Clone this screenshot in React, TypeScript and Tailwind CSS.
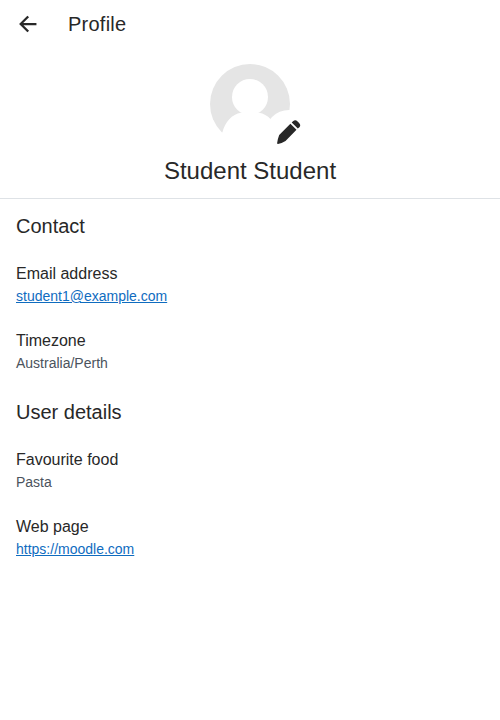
import React from "react";

type Field = { label: string; value: string; href?: string };

function Section({ title, fields }: { title: string; fields: Field[] }) {
  return (
    <section>
      <h2 className="flex h-[52px] items-center pt-0.5 text-[20px] leading-6">{title}</h2>
      {fields.map((f) => (
        <div key={f.label} className="h-[67px] pt-[11px]">
          <p className="text-base leading-6">{f.label}</p>
          {f.href ? (
            <a href={f.href} className="block w-fit text-sm leading-[21px] text-[#0f6cbf] underline">{f.value}</a>
          ) : (
            <p className="text-sm leading-[21px] text-[#4b535d]">{f.value}</p>
          )}
        </div>
      ))}
    </section>
  );
}

export default function App() {
  return (
    <main className="min-h-screen bg-white font-['Liberation_Sans',Arial,sans-serif] text-[#282828]">
      <header className="flex h-12 items-center pl-4">
        <button aria-label="Back" className="size-6">
          <svg viewBox="0 0 512 512" className="size-6" fill="none" stroke="currentColor" strokeWidth="48" strokeLinecap="square" strokeMiterlimit="10">
            <path d="M244 400 100 256l144-144M120 256h292" />
          </svg>
        </button>
        <h1 className="ml-7 text-[20px] leading-6 tracking-[0.24px]">Profile</h1>
      </header>
      <div className="flex h-[151px] flex-col items-center border-b border-[#dee2e6] pt-4">
        <div className="relative size-20">
          <svg viewBox="0 0 80 80" className="size-20">
            <circle cx="40" cy="40" r="40" fill="#e5e5e5" />
            <circle cx="40" cy="33" r="18" fill="#fff" />
            <path d="M12.300 68.700C15 58 22 50 31 48.700Q40 51 49 48.700C58 50 65 58 67.700 68.700V81H12.300Z" fill="#fff" />
            <path d="M0 68.500H80V80H0Z" fill="#fff" />
          </svg>
          <button aria-label="Edit picture" className="absolute -right-[23px] top-[46px] flex size-12 items-center justify-center rounded-full bg-white pb-1">
            <svg viewBox="0 0 24 24" className="size-6" fill="currentColor">
              <path d="M13.400 3.700 19.500 9.800 8.500 21Q4.500 23.500 1 24Q.1 24 .1 23.200Q.5 19.500 2.200 15.100ZM14.700 2.400 16 1.200Q18.300-.9 20.600 1.400L22.100 2.900Q24.200 5.200 22.400 7.200L20.800 8.600Z" />
            </svg>
          </button>
        </div>
        <h2 className="mt-3 text-[24px] leading-[30px]">Student Student</h2>
      </div>
      <div className="px-4">
        <Section title="Contact" fields={[
          { label: "Email address", value: "student1@example.com", href: "mailto:student1@example.com" },
          { label: "Timezone", value: "Australia/Perth" },
        ]} />
        <Section title="User details" fields={[
          { label: "Favourite food", value: "Pasta" },
          { label: "Web page", value: "https://moodle.com", href: "https://moodle.com" },
        ]} />
      </div>
    </main>
  );
}
